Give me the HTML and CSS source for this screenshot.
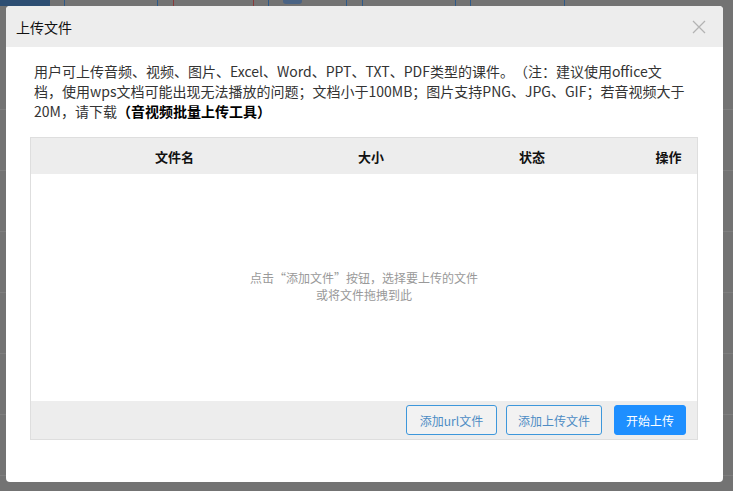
FILE: index.html
```html
<!DOCTYPE html>
<html lang="zh-CN">
<head>
    <meta charset="UTF-8">
    <meta name="viewport" content="width=device-width, initial-scale=1.0">
    <title>上传文件</title>
    <link rel="stylesheet" href="styles.css">
</head>
<body>
    <!-- page behind the mask -->
    <div class="page-bg">
        <div class="bg-tab"></div>
        <div class="bg-btn"></div>
    </div>

    <div class="modal">
        <div class="modal-header">
            <span class="modal-title">上传文件</span>
            <span class="modal-close">
                <svg width="14" height="14" viewBox="0 0 14 14">
                    <path d="M1 1 L13 13 M13 1 L1 13" stroke="#b3b3b3" stroke-width="1.3" fill="none"/>
                </svg>
            </span>
        </div>
        <div class="modal-body">
            <p class="tips">用户可上传音频、视频、图片、Excel、Word、PPT、TXT、PDF类型的课件。（注：建议使用office文档，使用wps文档可能出现无法播放的问题；文档小于100MB；图片支持PNG、JPG、GIF；若音视频大于20M，请下载<strong>（音视频批量上传工具）</strong></p>

            <div class="file-table">
                <div class="table-head">
                    <span>文件名</span>
                    <span>大小</span>
                    <span>状态</span>
                    <span>操作</span>
                </div>
                <div class="table-body">
                    <p class="empty-hint">点击“添加文件”按钮，选择要上传的文件<br>或将文件拖拽到此</p>
                </div>
                <div class="table-foot">
                    <button class="btn btn-outline btn-url">添加url文件</button>
                    <button class="btn btn-outline btn-add">添加上传文件</button>
                    <button class="btn btn-primary">开始上传</button>
                </div>
            </div>
        </div>
    </div>
</body>
</html>
```

FILE: styles.css
```css
* {
    box-sizing: border-box;
}
body {
    margin: 0;
    width: 733px;
    height: 491px;
    overflow: hidden;
    background-color: #737373;
    font-family: "Noto Sans CJK SC", "Noto Sans", sans-serif;
    position: relative;
}
.page-bg {
    position: absolute;
    left: 0;
    top: 0;
    width: 733px;
    height: 491px;
    background-image:
        repeating-linear-gradient(to bottom, transparent 0, transparent 48px, #7e7e7e 48px, #7e7e7e 49px, transparent 49px, transparent 61px),
        linear-gradient(to right, transparent 64px, #2e5a8a 64px, #2e5a8a 65px, transparent 65px,
            transparent 157px, #2e5a8a 157px, #2e5a8a 158px, transparent 158px,
            transparent 173px, #8a3a3a 173px, #8a3a3a 174px, transparent 174px,
            transparent 253px, #8a3a3a 253px, #8a3a3a 254px, transparent 254px,
            transparent 268px, #2e5a8a 268px, #2e5a8a 269px, transparent 269px,
            transparent 346px, #2e5a8a 346px, #2e5a8a 347px, transparent 347px,
            transparent 362px, #2e5a8a 362px, #2e5a8a 363px, transparent 363px,
            transparent 455px, #2e5a8a 455px, #2e5a8a 456px, transparent 456px,
            transparent 470px, #2e5a8a 470px, #2e5a8a 471px, transparent 471px,
            transparent 564px, #2e5a8a 564px, #2e5a8a 565px, transparent 565px);
    background-size: 733px 491px, 733px 6px;
    background-repeat: no-repeat;
    background-position: 0 61px, 0 0;
}
.bg-tab {
    position: absolute;
    left: 0;
    top: 0;
    width: 50px;
    height: 6px;
    background-color: #2d4e73;
}
.bg-btn {
    position: absolute;
    left: 283px;
    top: 0;
    width: 19px;
    height: 4px;
    border-radius: 0 0 3px 3px;
    background-color: #4a6384;
}
.modal {
    position: relative;
    margin: 6px 0 0 6px;
    width: 717px;
    height: 476px;
    background: white;
    border-radius: 4px;
    overflow: hidden;
}
.modal-header {
    height: 41px;
    background-color: #ededed;
    display: flex;
    align-items: center;
    justify-content: space-between;
    padding: 0 17px 0 10px;
}
.modal-title {
    font-size: 14px;
    color: #111;
}
.modal-close {
    display: flex;
    margin-top: 1px;
}
.modal-body {
    padding: 14px 25px 0 24px;
}
.tips {
    margin: 0;
    padding: 0 9px 0 4px;
    font-size: 14px;
    line-height: 20px;
    color: #333;
    text-spacing-trim: space-all;
}
.tips strong {
    color: #000;
    font-weight: bold;
}
.file-table {
    margin-top: 16px;
    border: 1px solid #dedede;
    height: 303px;
    display: flex;
    flex-direction: column;
}
.table-head {
    height: 36px;
    background-color: #ededed;
    display: grid;
    grid-template-columns: 287px 106px 216px 57px;
    align-items: center;
    font-size: 13px;
    font-weight: bold;
    color: #111;
}
.table-head span {
    text-align: center;
}
.table-body {
    flex: 1;
    display: flex;
    align-items: center;
    justify-content: center;
}
.empty-hint {
    margin: 0 0 4px;
    text-align: center;
    font-size: 12px;
    line-height: 17px;
    color: #999;
}
.table-foot {
    height: 38px;
    background-color: #ededed;
    display: flex;
    justify-content: flex-end;
    align-items: center;
    padding-right: 11px;
}
.btn {
    height: 30px;
    border-radius: 3px;
    font-size: 12px;
    font-family: inherit;
    cursor: pointer;
    padding: 0;
}
.btn-outline {
    background: #f2f2f2;
    border: 1px solid #3d97db;
    color: #4d8cc4;
    margin-right: 9px;
}
.btn-url {
    width: 91px;
}
.btn-add {
    width: 96px;
    margin-right: 12px;
}
.btn-primary {
    width: 72px;
    background-color: #1e8fff;
    border: 1px solid #1e8fff;
    color: white;
}
```
